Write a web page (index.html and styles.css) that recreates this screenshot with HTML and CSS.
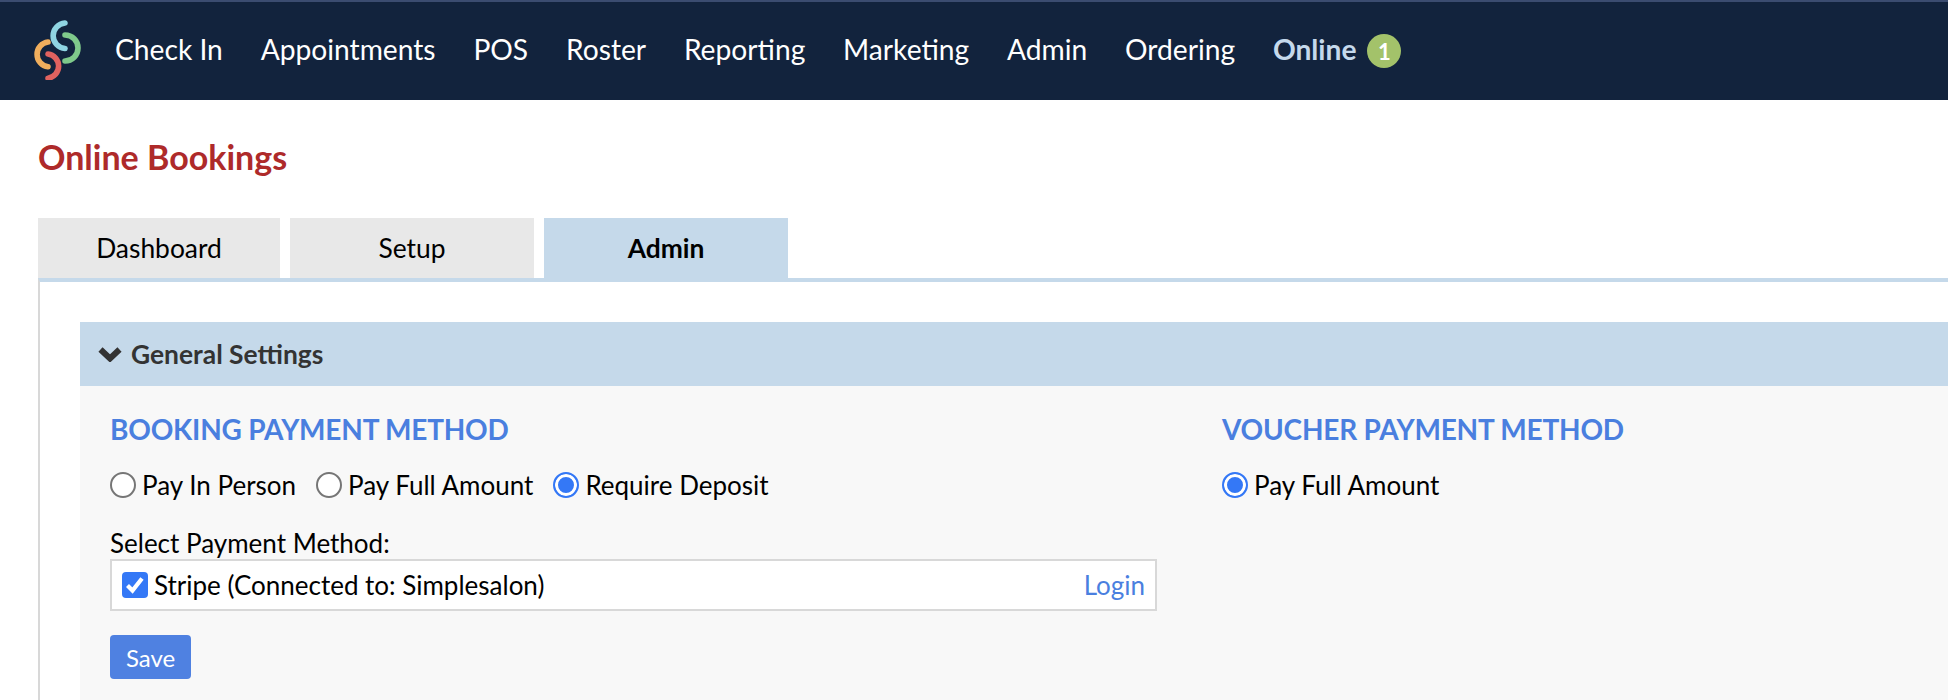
FILE: index.html
```html
<!DOCTYPE html>
<html lang="en">
<head>
<meta charset="utf-8">
<title>Online Bookings</title>
<link rel="stylesheet" href="styles.css">
</head>
<body>
<header class="topbar">
  <svg class="logo" width="48" height="60" viewBox="33 20 48 60" fill="none" stroke-width="5.6" stroke-linecap="round">
    <path d="M65 23 A13 12.8 0 0 0 65 48.5" stroke="#8fd4e2"/>
    <path d="M65 35 A13 13 0 0 1 65 61" stroke="#7fc98b"/>
    <path d="M48 42 A12.5 12.5 0 0 0 48 66.8" stroke="#f0ae5d"/>
    <path d="M48 54 A12.2 12.2 0 0 1 48 78.2" stroke="#e0625f"/>
  </svg>
  <nav class="nav">
    <a class="nav-link">Check In</a>
    <a class="nav-link">Appointments</a>
    <a class="nav-link">POS</a>
    <a class="nav-link">Roster</a>
    <a class="nav-link">Reporting</a>
    <a class="nav-link">Marketing</a>
    <a class="nav-link">Admin</a>
    <a class="nav-link">Ordering</a>
    <a class="nav-link nav-active">Online <span class="badge">1</span></a>
  </nav>
</header>
<main class="page">
  <h1 class="title">Online Bookings</h1>
  <div class="tabs">
    <a class="tab">Dashboard</a>
    <a class="tab">Setup</a>
    <a class="tab tab-active">Admin</a>
  </div>
  <section class="panel">
    <div class="accordion-head">
      <svg class="chevron" width="24" height="16" viewBox="0 0 24 16"><path d="M2.500 3.500 L12 12.500 L21.500 3.500" fill="none" stroke="#333" stroke-width="6"/></svg>
      <span>General Settings</span>
    </div>
    <div class="accordion-body">
      <div class="col col-left">
        <h2 class="heading">BOOKING PAYMENT METHOD</h2>
        <div class="radios">
          <label class="opt"><span class="radio"></span>Pay In Person</label>
          <label class="opt"><span class="radio"></span>Pay Full Amount</label>
          <label class="opt"><span class="radio radio-on"></span>Require Deposit</label>
        </div>
        <div class="select-label">Select Payment Method:</div>
        <div class="method">
          <label class="opt">
            <span class="check"><svg width="26" height="26" viewBox="0 0 26 26"><path d="M5.500 13.500 L10.500 18.500 L20 6.500" fill="none" stroke="#fff" stroke-width="4.200"/></svg></span>
            Stripe (Connected to: Simplesalon)
          </label>
          <a class="login">Login</a>
        </div>
        <button class="save" type="button">Save</button>
      </div>
      <div class="col">
        <h2 class="heading">VOUCHER PAYMENT METHOD</h2>
        <div class="radios">
          <label class="opt"><span class="radio radio-on"></span>Pay Full Amount</label>
        </div>
      </div>
    </div>
  </section>
</main>
</body>
</html>
```
FILE: styles.css
```css
* { box-sizing: border-box; }
html, body { margin: 0; padding: 0; height: 700px; overflow: hidden; background: #fff; }
body { font-family: Lato, "Liberation Sans", sans-serif; color: #000; }

.topbar {
  height: 100px;
  background: #12233d;
  border-top: 2px solid #3b4c70;
  display: flex;
  align-items: center;
  padding-left: 33px;
}
.logo { flex: none; margin-right: 34px; margin-bottom: 2px; }
.nav { display: flex; gap: 37.8px; align-items: center; margin-bottom: 4px; }
.nav-link { color: #fff; font-size: 28.2px; display: flex; align-items: center; gap: 11px; }
.nav-active { color: #c5d9ec; font-weight: 700; }
.badge {
  width: 34px; height: 34px; border-radius: 50%;
  background: #a3c26a; color: #fff;
  font-size: 22px; font-weight: 700;
  margin-top: 4px;
  display: flex; align-items: center; justify-content: center;
}

.page { padding: 37px 0 0 38px; }
.title { margin: 0; font-size: 34px; line-height: 40px; font-weight: 700; color: #ae2a2a; }
.tabs { display: flex; gap: 10px; margin-top: 41px; }
.tab {
  width: 244px; height: 60px;
  background: #e8e8e8;
  font-size: 26.4px;
  display: flex; align-items: center; justify-content: center;
}
.tab:first-child { width: 242px; }
.tab-active { background: #c5d9ea; font-weight: 700; }

.panel {
  border-top: 4px solid #c5d9ea;
  border-left: 2px solid #d8d8d8;
  padding: 40px 0 0 40px;
}
.accordion-head {
  height: 64px;
  background: #c5d9ea;
  color: #333;
  font-size: 26.4px; font-weight: 700;
  display: flex; align-items: center; gap: 9px;
  padding-left: 18px;
}
.chevron { flex: none; }
.accordion-body {
  background: #f8f8f8;
  display: flex;
  padding: 27px 0 0 30px;
  height: 320px;
}
.col-left { width: 1112px; }
.heading { margin: 0; font-size: 28px; line-height: 32px; font-weight: 700; color: #4a7fdf; letter-spacing: -0.2px; }
.radios { display: flex; gap: 20px; margin-top: 25px; height: 30px; align-items: center; }
.opt { display: flex; align-items: center; gap: 6px; font-size: 26px; }
.radio {
  width: 26px; height: 26px; border-radius: 50%;
  border: 2px solid #767676; background: #fff; flex: none;
}
.radio-on { border-color: #3478f6; background: #3478f6; box-shadow: inset 0 0 0 3px #fff; }
.select-label { font-size: 26px; line-height: 31px; margin-top: 28px; }
.method {
  width: 1047px; height: 52px; margin-top: 0;
  background: #fff; border: 2px solid #d8d8d8;
  display: flex; align-items: center; justify-content: space-between;
  padding: 0 10px;
}
.check { width: 26px; height: 26px; border-radius: 4px; background: #3478f6; flex: none; display: block; }
.check svg { display: block; }
.login { color: #4a7fdf; font-size: 26px; }
.save {
  display: block;
  margin-top: 24px;
  width: 81px; height: 44px;
  background: #4f81e1; color: #fff;
  border: 0; border-radius: 4px;
  font-family: inherit; font-size: 24px;
  padding: 0;
}
```
